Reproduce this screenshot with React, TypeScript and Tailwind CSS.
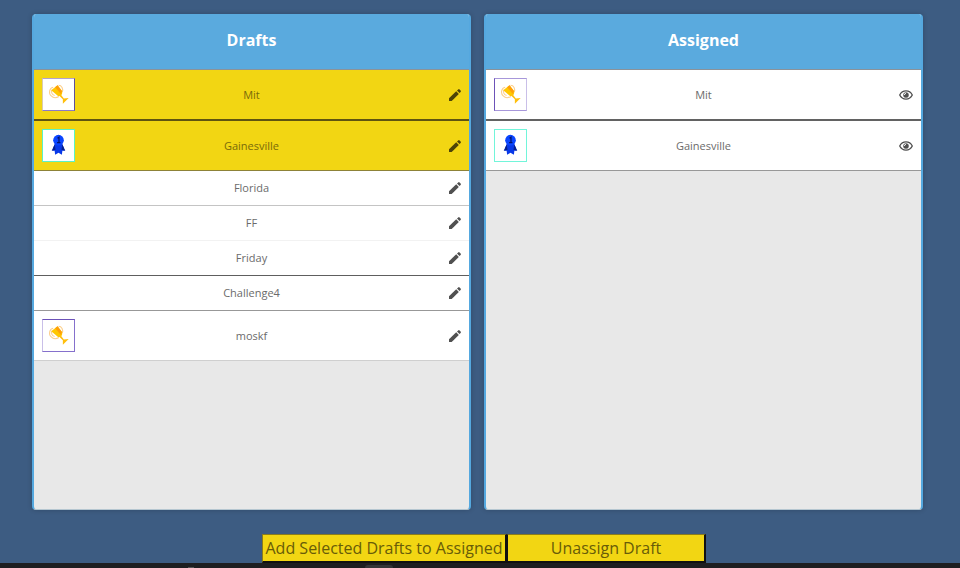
import { useState } from 'react';

type Badge = 'trophy' | 'ribbon';

interface Challenge {
  name: string;
  badge?: Badge;
  line: string;
  frame?: string;
}

const drafts: Challenge[] = [
  { name: 'Mit', badge: 'trophy', line: 'border-b-2 border-[#5f5410]', frame: 'border-t-[#b3a3cc] border-l-[#d9cbb0] border-r-[#5d4f9c] border-b-[#8b7ac6]' },
  { name: 'Gainesville', badge: 'ribbon', line: 'border-b border-[#8d8238]', frame: 'border-[#5cf2c4]' },
  { name: 'Florida', line: 'border-b border-[#c4c4c4]' },
  { name: 'FF', line: 'border-b border-[#f2f2f2]' },
  { name: 'Friday', line: 'border-b border-[#5e5e5e]' },
  { name: 'Challenge4', line: 'border-b border-[#989898]' },
  { name: 'moskf', badge: 'trophy', line: 'border-b border-[#cfcfcf]', frame: 'border-t-[#6c52b8] border-l-[#c9bfe8] border-r-[#8570cc] border-b-[#8570cc]' },
];

const assigned: Challenge[] = [
  { name: 'Mit', badge: 'trophy', line: 'border-b-2 border-[#626262]', frame: 'border-t-[#a797da] border-l-[#6c52b8] border-r-[#c9bfe8] border-b-[#a797da]' },
  { name: 'Gainesville', badge: 'ribbon', line: 'border-b border-[#989898]', frame: 'border-[#72f5da]' },
];

function Trophy() {
  return (
    <svg viewBox="1 1 32 32" className="h-full w-full" aria-hidden="true">
      <g fill="none" stroke="#fccf8c" strokeWidth="1.1">
        <path d="M11.500 9.500C7.500 10 6.500 16 9.500 18.500C11.500 20.500 15 20.500 17.500 19" />
        <path d="M10.500 12C9 14 10 17.500 13 18" />
        <path d="M17 7.500C20.500 7.500 22 11 21 14.500" />
      </g>
      <path d="M9.500 12.500L16 7.500L20.500 13C21.500 16 20 19 16.500 18.500Z" fill="#ffc800" />
      <path d="M13.500 9.500L16 7.500L20.500 13.500L19.500 16.500Z" fill="#ff9f0a" />
      <path d="M17.500 18L19 16.500L22.500 21L27.500 20.500L21.500 26.500L21.500 22Z" fill="#ffbf0d" />
    </svg>
  );
}

function Ribbon() {
  return (
    <svg viewBox="1 1 32 32" className="h-full w-full" aria-hidden="true">
      <path d="M13.500 14L10.500 22.500L13 22.500L13.500 26.500L17 24.500L20.500 26.500L21 22.500L23.500 22.500L20.500 14Z" fill="#0838e8" />
      <path d="M13 16L10 22.500L14 21.500ZM21 16L24 22.500L20 21.500Z" fill="#06208f" />
      <circle cx="17" cy="11.500" r="5.500" fill="#0a45ff" />
      <path d="M16 9.500L17.500 8.500V14M15.500 14H19" fill="none" stroke="#04146b" strokeWidth="1.300" />
    </svg>
  );
}

function Pencil() {
  return (
    <svg viewBox="0 0 12 12" width="12" height="12" fill="currentColor" aria-hidden="true">
      <path d="M0 12V9.300L7.200 2.300L9.800 4.900L2.700 12Z" />
      <path d="M8 1.500L9.200 0.400Q9.900 -0.200 10.600 0.400L11.600 1.400Q12.300 2.200 11.600 2.900L10.500 4.100Z" />
    </svg>
  );
}

function Eye() {
  return (
    <svg viewBox="0 0 14 14" width="14" height="14" fill="none" stroke="currentColor" aria-hidden="true">
      <path d="M0.700 7C3.400 1.600 10.600 1.600 13.300 7C10.600 12.400 3.400 12.400 0.700 7Z" strokeWidth="1.300" />
      <circle cx="7" cy="7" r="2.600" fill="currentColor" strokeWidth="0.400" />
      <path d="M5.400 7A1.600 1.600 0 0 1 7 5.400" stroke="#fff" strokeWidth="0.900" />
    </svg>
  );
}

interface PanelProps {
  title: string;
  items: Challenge[];
  action: 'Edit' | 'View';
  selected?: string[];
  onToggle?: (name: string) => void;
}

function Panel({ title, items, action, selected = [], onToggle }: PanelProps) {
  return (
    <section className="min-h-[496px] min-w-0 flex-1 overflow-hidden rounded border-x-2 border-b border-x-[#55a8df] border-b-[#b5c6d0] bg-[#e8e8e8] shadow-[0_0_5px_rgba(0,0,0,0.2)]">
      <h2 className="-mx-px border-b border-[#8b9299] bg-[#5aaade] pt-[14px] pb-[17px] text-center text-base leading-6 font-bold text-white">
        {title}
      </h2>
      <ul>
        {items.map((item) => {
          const active = selected.includes(item.name);
          return (
            <li
              key={item.name}
              onClick={() => onToggle?.(item.name)}
              className={`grid grid-cols-[33px_1fr_33px] items-center px-2 ${item.badge ? 'py-2' : 'py-[5px]'} ${item.line} ${active ? 'bg-[#f2d613] text-[#796b0a]' : 'bg-white text-[#6b6b6b]'}`}
            >
              {item.badge ? (
                <div className={`h-[33px] w-[33px] border bg-white ${item.frame}`}>
                  {item.badge === 'trophy' ? <Trophy /> : <Ribbon />}
                </div>
              ) : (
                <div />
              )}
              <span className="text-center text-[11px] leading-6">{item.name}</span>
              <button
                type="button"
                aria-label={`${action} ${item.name}`}
                className={`justify-self-end ${active ? 'text-[#4d4408]' : 'text-[#505050]'}`}
              >
                {action === 'Edit' ? <Pencil /> : <Eye />}
              </button>
            </li>
          );
        })}
      </ul>
    </section>
  );
}

export default function App() {
  const [selected, setSelected] = useState(['Mit', 'Gainesville']);
  const toggle = (name: string) =>
    setSelected((now) => (now.includes(name) ? now.filter((n) => n !== name) : [...now, name]));

  return (
    <div className="flex min-h-screen flex-col bg-[#3d5c82] font-['Open_Sans','Noto_Sans',sans-serif]">
      <main className="flex flex-1 flex-col pt-[14px]">
        <div className="flex gap-[13px] pr-[37px] pl-8">
          <Panel title="Drafts" items={drafts} action="Edit" selected={selected} onToggle={toggle} />
          <Panel title="Assigned" items={assigned} action="View" />
        </div>
        <div className="mt-6 flex justify-center pl-2 text-base leading-6 text-[#685c08]">
          <button type="button" className="h-[29px] w-[245px] border border-t-[#8a7c1c] border-r-2 border-b-2 border-l-[#8a7c1c] border-r-[#111] border-b-[#111] bg-[#f2d613] whitespace-nowrap">
            Add Selected Drafts to Assigned
          </button>
          <button type="button" className="h-[29px] w-[199px] border border-t-[#8a7c1c] border-r-2 border-b-2 border-l-[#111] border-r-[#111] border-b-[#111] bg-[#f2d613] whitespace-nowrap">
            Unassign Draft
          </button>
        </div>
      </main>
      <footer className="flex h-[5px] items-end bg-[#1e1e20]">
        <div className="ml-[188px] h-px w-[6px] bg-[#555]" />
        <div className="ml-[171px] h-[3px] w-7 rounded-t-sm bg-[#353537]" />
      </footer>
    </div>
  );
}
